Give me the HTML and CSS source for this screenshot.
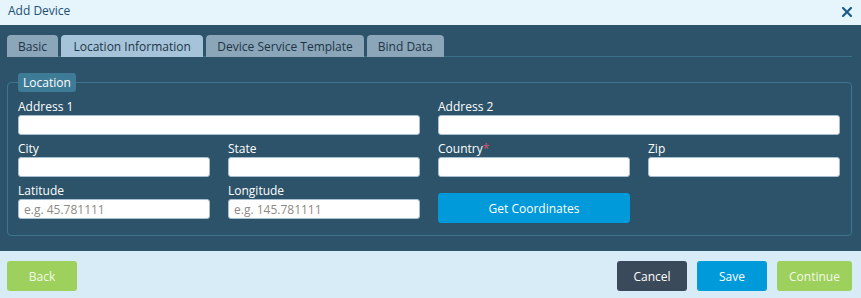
FILE: index.html
```html
<!DOCTYPE html>
<html lang="en">
<head>
    <meta charset="UTF-8">
    <title>Add Device</title>
    <link rel="stylesheet" href="styles.css">
</head>
<body>
    <div class="dialog">
        <div class="dialog-header">
            <span class="dialog-title">Add Device</span>
            <svg class="close-icon" width="10" height="10" viewBox="0 0 10 10">
                <path d="M1 1 L9 9 M9 1 L1 9" stroke="#1b5b86" stroke-width="2.2" stroke-linecap="square"/>
            </svg>
        </div>

        <div class="dialog-body">
            <div class="tabs">
                <div class="tab first">Basic</div>
                <div class="tab active">Location Information</div>
                <div class="tab">Device Service Template</div>
                <div class="tab">Bind Data</div>
            </div>

            <fieldset class="location">
                <legend>Location</legend>
                <div class="form-grid">
                    <div class="field wide">
                        <label>Address 1</label>
                        <input type="text">
                    </div>
                    <div class="field wide">
                        <label>Address 2</label>
                        <input type="text">
                    </div>
                    <div class="field">
                        <label>City</label>
                        <input type="text">
                    </div>
                    <div class="field">
                        <label>State</label>
                        <input type="text">
                    </div>
                    <div class="field">
                        <label>Country<span class="req">*</span></label>
                        <input type="text">
                    </div>
                    <div class="field">
                        <label>Zip</label>
                        <input type="text">
                    </div>
                    <div class="field">
                        <label>Latitude</label>
                        <input type="text" placeholder="e.g. 45.781111">
                    </div>
                    <div class="field">
                        <label>Longitude</label>
                        <input type="text" placeholder="e.g. 145.781111">
                    </div>
                    <div class="field">
                        <button class="btn btn-blue coords">Get Coordinates</button>
                    </div>
                </div>
            </fieldset>
        </div>

        <div class="dialog-footer">
            <button class="btn btn-green">Back</button>
            <div class="footer-right">
                <button class="btn btn-dark">Cancel</button>
                <button class="btn btn-blue">Save</button>
                <button class="btn btn-green wider">Continue</button>
            </div>
        </div>
    </div>
</body>
</html>
```

FILE: styles.css
```css
body {
    margin: 0;
    font-family: 'Open Sans', 'Liberation Sans', sans-serif;
    font-size: 12px;
    background: #d8ecf7;
}

.dialog {
    width: 861px;
    height: 298px;
    display: flex;
    flex-direction: column;
}

.dialog-header {
    height: 25px;
    background: #e6f4fb;
    display: flex;
    align-items: center;
    justify-content: space-between;
    padding: 0 9px 0 8px;
}
.dialog-title {
    color: #1b4f73;
    font-size: 12px;
    margin-top: -4px;
}
.close-icon {
    margin-top: -2px;
}

.dialog-body {
    background: #2c536a;
    padding: 10px 9px 15px 7px;
}

.tabs {
    display: flex;
    gap: 3px;
    height: 21px;
    border-bottom: 1px solid #3a7189;
}
.tab {
    height: 22px;
    line-height: 23px;
    padding: 0 11px;
    background: #8ba6b9;
    color: #1d3447;
    border-radius: 4px 4px 0 0;
}
.tab.active {
    background: #a5c4d9;
    padding: 0 12.5px;
}

.location {
    margin: 16px 0 0 0;
    padding: 5px 10px 12px 10px;
    border: 1px solid #3d7590;
    border-radius: 4px;
}
.location legend {
    background: #3e7b96;
    color: #fff;
    padding: 0 5px;
    height: 19px;
    line-height: 20px;
    border-radius: 3px;
}

.form-grid {
    display: grid;
    grid-template-columns: repeat(4, 192px);
    column-gap: 18px;
    row-gap: 4px;
}
.field {
    display: flex;
    flex-direction: column;
}
.field.wide {
    grid-column: span 2;
}
.field label {
    color: #fff;
    line-height: 15px;
    padding-top: 2px;
    margin-bottom: 1px;
}
.req {
    color: #e0506a;
}
.field input {
    box-sizing: border-box;
    height: 20px;
    border: 1px solid #a7c0d1;
    border-radius: 3px;
    background: #fff;
    padding: 0 5px;
    font-family: inherit;
    font-size: 12px;
}
.field input::placeholder {
    color: #8c8a86;
}

.btn {
    height: 30px;
    width: 70px;
    border: none;
    border-radius: 3px;
    font-family: inherit;
    font-size: 12px;
    color: #fff;
    cursor: pointer;
}
.btn-green {
    background: #9dd05d;
    color: #f3fae6;
}
.btn-blue {
    background: #0099da;
}
.btn-dark {
    background: #3b4a5a;
}
.btn.wider {
    width: 75px;
}
.coords {
    width: 192px;
    margin-top: 12px;
}

.dialog-footer {
    flex: 1;
    display: flex;
    justify-content: space-between;
    align-items: flex-start;
    padding: 10px 9px 0 7px;
    background: #d8ecf7;
}
.footer-right {
    display: flex;
    gap: 10px;
}
```
